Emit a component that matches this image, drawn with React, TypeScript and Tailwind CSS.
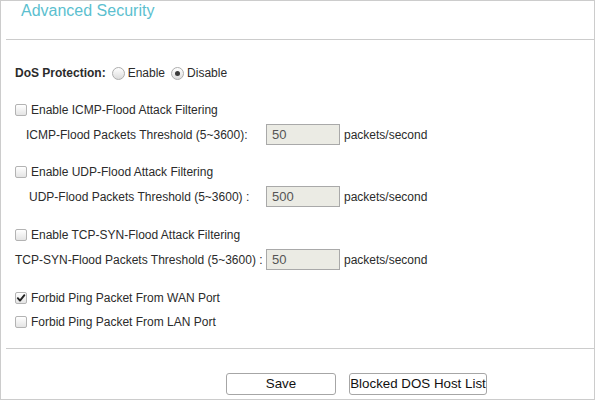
import React from 'react'

const font = "font-['Liberation_Sans',Arial,sans-serif]"

const Checkbox = ({ checked = false }: { checked?: boolean }) => {
  return <span className='relative inline-block w-[12px] h-[12px] shrink-0 rounded-[2px] border border-[#b3b3b3] bg-linear-to-b from-white to-[#e4e4e4]'>
    {checked &&
      <svg className='absolute left-[0px] top-[0px]' width='10' height='10' viewBox='0 0 10 10'>
        <path d='M1.8 5.2 L4 7.6 L8.4 2.2' fill='none' stroke='#222' strokeWidth='1.9' strokeLinecap='round' strokeLinejoin='round' />
      </svg>
    }
  </span>
}

const Radio = ({ checked = false }: { checked?: boolean }) => {
  return <span className='relative inline-flex items-center justify-center w-[13px] h-[13px] shrink-0 rounded-full border border-[#adadad] bg-linear-to-b from-white to-[#dcdcdc]'>
    {checked && <span className='w-[5px] h-[5px] rounded-full bg-[#3a3a3a]' />}
  </span>
}

const CheckRow = ({ label, checked, mt }: { label: string, checked?: boolean, mt: string }) => {
  return <div className={`${mt} h-[20px] flex items-center pl-[14px]`}>
    <Checkbox checked={checked} />
    <span className='ml-[4px] whitespace-nowrap'>{label}</span>
  </div>
}

const ThresholdRow = ({ label, value, pl }: { label: string, value: string, pl: string }) => {
  return <div className='mt-[4px] h-[21px] flex items-center'>
    <span className={`w-[265px] shrink-0 whitespace-nowrap ${pl}`}>{label}</span>
    <div className='w-[74px] h-[21px] border border-[#a9a9a9] bg-[#ebebe4] pl-[5px] flex items-center text-[13px] text-[#555]'>
      {value}
    </div>
    <span className='ml-[4px] whitespace-nowrap'>packets/second</span>
  </div>
}

export default function App() {
  return <div className={`${font} w-[595px] h-[400px] border border-[#cccccc] bg-white text-[12px] text-[#2b2b2b]`}>
    <div className='h-[38px] pl-[20px] text-[16px] leading-[20px] text-[#5cbfcf]'>Advanced Security</div>
    <div className='ml-[5px] border-t border-[#cccccc]' />

    <div className='mt-[23px] h-[20px] flex items-center pl-[14px]'>
      <span className='font-bold'>DoS Protection:</span>
      <span className='ml-[6px] flex items-center'><Radio /></span>
      <span className='ml-[3px]'>Enable</span>
      <span className='ml-[6px] flex items-center'><Radio checked /></span>
      <span className='ml-[3px]'>Disable</span>
    </div>

    <CheckRow mt='mt-[17px]' label='Enable ICMP-Flood Attack Filtering' />
    <ThresholdRow pl='pl-[25px]' label='ICMP-Flood Packets Threshold (5~3600):' value='50' />

    <CheckRow mt='mt-[17px]' label='Enable UDP-Flood Attack Filtering' />
    <ThresholdRow pl='pl-[28px]' label='UDP-Flood Packets Threshold (5~3600) :' value='500' />

    <CheckRow mt='mt-[18px]' label='Enable TCP-SYN-Flood Attack Filtering' />
    <ThresholdRow pl='pl-[14px]' label='TCP-SYN-Flood Packets Threshold (5~3600) :' value='50' />

    <CheckRow mt='mt-[18px]' checked label='Forbid Ping Packet From WAN Port' />
    <CheckRow mt='mt-[4px]' label='Forbid Ping Packet From LAN Port' />

    <div className='mt-[16px] ml-[5px] border-t border-[#cccccc]' />

    <div className='mt-[24px] flex pl-[225px] text-[13.33px] text-[#111]'>
      <button className='w-[110px] h-[22px] rounded-[3px] border border-[#a6a6a6] bg-white flex items-center justify-center'>Save</button>
      <button className='ml-[13px] w-[138px] h-[22px] rounded-[3px] border border-[#a6a6a6] bg-white flex items-center justify-center whitespace-nowrap'>Blocked DOS Host List</button>
    </div>
  </div>
}
